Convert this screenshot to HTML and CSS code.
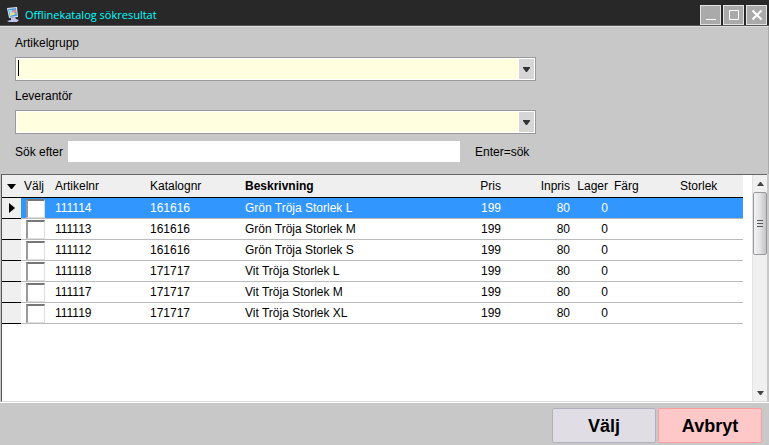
FILE: index.html
```
<!DOCTYPE html>
<html lang="sv">
<head>
  <meta charset="UTF-8" />
  <meta name="viewport" content="width=device-width, initial-scale=1.0"/>
  <title>Offlinekatalog sökresultat</title>
  <link rel="stylesheet" href="styles.css">
</head>
<body>
  <header class="titlebar">
    <svg class="app-icon" width="14" height="16" viewBox="0 0 14 16" aria-hidden="true">
      <path d="M1 1l10-1 1 10-9 1z" fill="#dfe6f5"/>
      <path d="M2 2l8-1 1 8-7 1z" fill="#4b9be0"/>
      <path d="M3 3h3v4H4z" fill="#9be3f0"/>
      <path d="M6 4l3-2 1 3-3 2z" fill="#e98a96"/>
      <path d="M4 7l3-2 3 2-6 2z" fill="#e5e38a"/>
      <path d="M5 11l4-1 1 2 3 1-2 2H3l-2-1 4-1z" fill="#c3c4ea"/>
    </svg>
    <h1>Offlinekatalog sökresultat</h1>
    <div class="window-buttons">
      <button type="button" aria-label="Minimera">
        <svg width="18" height="18" viewBox="0 0 18 18"><path d="M4 13.5h10"/></svg>
      </button>
      <button type="button" aria-label="Maximera">
        <svg width="18" height="18" viewBox="0 0 18 18"><path d="M4.5 4.5h9v9h-9z"/></svg>
      </button>
      <button type="button" aria-label="Stäng">
        <svg width="18" height="18" viewBox="0 0 18 18"><path class="thick" d="M4.5 4.5l9 9m0-9l-9 9"/></svg>
      </button>
    </div>
  </header>

  <form class="search">
    <label for="group">Artikelgrupp</label>
    <div class="combo">
      <select id="group"><option value=""></option></select>
      <span class="caret"></span>
      <span class="arrow"><svg width="7" height="5" viewBox="0 0 7 5"><path d="M0 0h7v1L4 5H3L0 1z"/></svg></span>
    </div>
    <label for="supplier">Leverantör</label>
    <div class="combo">
      <select id="supplier"><option value=""></option></select>
      <span class="arrow"><svg width="7" height="5" viewBox="0 0 7 5"><path d="M0 0h7v1L4 5H3L0 1z"/></svg></span>
    </div>
    <div class="search-row">
      <label for="query">Sök efter</label>
      <input type="text" id="query" />
      <span class="hint">Enter=sök</span>
    </div>
  </form>

  <main class="grid">
    <div class="table-area">
      <table>
        <colgroup>
          <col class="c-mark"><col class="c-pick"><col class="c-nr"><col class="c-nr"><col>
          <col class="c-price"><col class="c-inprice"><col class="c-stock"><col class="c-prop"><col class="c-prop">
        </colgroup>
        <thead>
          <tr>
            <th class="mark"><svg width="9" height="5" viewBox="0 0 9 5"><path d="M0 0h9L5 5H4z"/></svg></th>
            <th>Välj</th>
            <th>Artikelnr</th>
            <th>Katalognr</th>
            <th class="sorted">Beskrivning</th>
            <th class="num">Pris</th>
            <th class="num">Inpris</th>
            <th class="num">Lager</th>
            <th>Färg</th>
            <th>Storlek</th>
          </tr>
        </thead>
        <tbody>
          <tr class="selected">
            <td class="mark"><svg width="6" height="10" viewBox="0 0 6 10"><path d="M0 0l6 5-6 5z"/></svg></td>
            <td class="pick"><input type="checkbox" aria-label="Välj 111114" /></td>
            <td>111114</td><td>161616</td><td>Grön Tröja Storlek L</td>
            <td class="num">199</td><td class="num">80</td><td class="num">0</td><td></td><td></td>
          </tr>
          <tr>
            <td class="mark"></td>
            <td class="pick"><input type="checkbox" aria-label="Välj 111113" /></td>
            <td>111113</td><td>161616</td><td>Grön Tröja Storlek M</td>
            <td class="num">199</td><td class="num">80</td><td class="num">0</td><td></td><td></td>
          </tr>
          <tr>
            <td class="mark"></td>
            <td class="pick"><input type="checkbox" aria-label="Välj 111112" /></td>
            <td>111112</td><td>161616</td><td>Grön Tröja Storlek S</td>
            <td class="num">199</td><td class="num">80</td><td class="num">0</td><td></td><td></td>
          </tr>
          <tr>
            <td class="mark"></td>
            <td class="pick"><input type="checkbox" aria-label="Välj 111118" /></td>
            <td>111118</td><td>171717</td><td>Vit Tröja Storlek L</td>
            <td class="num">199</td><td class="num">80</td><td class="num">0</td><td></td><td></td>
          </tr>
          <tr>
            <td class="mark"></td>
            <td class="pick"><input type="checkbox" aria-label="Välj 111117" /></td>
            <td>111117</td><td>171717</td><td>Vit Tröja Storlek M</td>
            <td class="num">199</td><td class="num">80</td><td class="num">0</td><td></td><td></td>
          </tr>
          <tr>
            <td class="mark"></td>
            <td class="pick"><input type="checkbox" aria-label="Välj 111119" /></td>
            <td>111119</td><td>171717</td><td>Vit Tröja Storlek XL</td>
            <td class="num">199</td><td class="num">80</td><td class="num">0</td><td></td><td></td>
          </tr>
        </tbody>
      </table>
    </div>
    <div class="scrollbar" aria-hidden="true">
      <span class="step"><svg width="7" height="4" viewBox="0 0 7 4"><path d="M0 4l3-4h1l3 4z"/></svg></span>
      <span class="thumb"><i></i><i></i><i></i></span>
      <span class="step last"><svg width="7" height="4" viewBox="0 0 7 4"><path d="M0 0h7L4 4H3z"/></svg></span>
    </div>
  </main>

  <footer>
    <button type="button" class="button">Välj</button>
    <button type="button" class="button cancel">Avbryt</button>
  </footer>
</body>
</html>
```

FILE: styles.css
```
* {
  box-sizing: border-box;
}
body {
  font-family: "Liberation Sans", Arial, sans-serif;
  font-size: 12px;
  line-height: 16px;
  background: #c8c8c8;
  color: #000;
  margin: 0;
  min-height: 100vh;
  display: flex;
  flex-direction: column;
}
svg {
  display: block;
}
.titlebar {
  display: flex;
  align-items: center;
  height: 26px;
  padding: 5px 2px 0 6px;
  background: #282828;
  border-bottom: 1px solid #555;
}
.titlebar h1 {
  flex: 1;
  margin: 0 0 0 5px;
  font-family: "Open Sans", "Segoe UI", sans-serif;
  font-size: 11px;
  font-weight: 400;
  color: #00ffff;
}
.window-buttons {
  display: flex;
  gap: 2px;
}
.window-buttons button {
  width: 21px;
  height: 20px;
  padding: 0 1px;
  background: #aaa;
  border: 1px solid #e4e4e4;
}
.window-buttons path {
  fill: none;
  stroke: #fff;
}
.window-buttons .thick {
  stroke-width: 2;
}
.search {
  padding: 6px 15px 12px;
  border-top: 1px solid #ddd;
  border-right: 1px solid #aaa;
}
.search > label {
  display: block;
  line-height: 20px;
}
.combo {
  position: relative;
  max-width: 521px;
  margin: 4px 0 5px;
}
.combo select {
  display: block;
  width: 100%;
  height: 24px;
  appearance: none;
  background: #ffffdf;
  border: 1px solid #999;
  border-radius: 0;
  box-shadow: inset 0 0 0 1px #fff;
  font: inherit;
  outline: none;
}
.caret {
  position: absolute;
  left: 3px;
  top: 3px;
  width: 1px;
  height: 16px;
  background: #000;
}
.arrow {
  position: absolute;
  top: 2px;
  right: 2px;
  bottom: 2px;
  width: 15px;
  display: flex;
  align-items: center;
  justify-content: center;
  background: #d6d6d6;
  box-shadow: -1px 0 #fff;
  pointer-events: none;
}
.arrow path {
  fill: #333;
}
.search-row {
  display: flex;
  align-items: center;
  margin-top: 7px;
}
.search-row label {
  width: 53px;
  white-space: nowrap;
}
.search-row input {
  width: 392px;
  height: 21px;
  padding: 0 3px;
  border: 0;
  background: #fff;
  font: inherit;
  outline: none;
}
.hint {
  margin-left: 15px;
}

/* result list */
.grid {
  flex: 1;
  display: flex;
  margin: 0 2px 0 1px;
  background: #fff;
  border-top: 1px solid #666;
  border-left: 1px solid #555;
  border-bottom: 1px solid #ddd;
}
.table-area {
  flex: 1;
  margin-right: 9px;
}
table {
  width: 100%;
  table-layout: fixed;
  border-collapse: separate;
  border-spacing: 0;
}
.c-mark { width: 19px; }
.c-pick { width: 31px; }
.c-nr { width: 95px; }
.c-price { width: 60px; }
.c-inprice { width: 69px; }
.c-stock { width: 38px; }
.c-prop { width: 66px; }
th, td {
  padding: 0 3px;
  text-align: left;
  font-weight: 400;
  white-space: nowrap;
}
th {
  height: 23px;
  background: #efefef;
  border-bottom: 1px solid #000;
}
td {
  height: 21px;
  border-bottom: 1px solid #bbb;
}
.sorted {
  font-weight: 700;
}
.num {
  text-align: right;
}
.mark {
  padding: 0 5px;
}
td.mark {
  padding: 0 7px;
  background: #efefef;
  border-bottom-color: #000;
}
.selected td:not(.mark) {
  background: #3296ff;
  color: #fff;
}
.pick {
  padding: 0 0 0 5px;
}
.pick input {
  display: block;
  appearance: none;
  width: 19px;
  height: 19px;
  margin: 0;
  background: #fff;
  border: 1px solid #ddd;
  border-top: 2px solid #777;
  border-left: 2px solid #999;
}
.scrollbar {
  width: 15px;
  display: flex;
  flex-direction: column;
  background: #f0f0f0;
  border-left: 1px solid #e2e2e2;
}
.step {
  height: 17px;
  display: flex;
  align-items: center;
  justify-content: center;
}
.step path {
  fill: #444;
}
.last {
  margin-top: auto;
}
.thumb {
  height: 63px;
  display: flex;
  flex-direction: column;
  align-items: center;
  justify-content: center;
  gap: 2px;
  background: linear-gradient(to right, #f4f4f4, #e2e2e4 50%, #c4c4c8);
  border: 1px solid #999;
  border-radius: 2px;
}
.thumb i {
  width: 6px;
  height: 1px;
  background: #555;
}
footer {
  display: flex;
  justify-content: flex-end;
  gap: 2px;
  padding: 5px 7px 2px;
  border-top: 1px solid #fff;
}
.button {
  width: 104px;
  height: 35px;
  padding: 0;
  background: #e0dee4;
  border: 1px solid #b0b0c0;
  border-radius: 2px;
  color: #000;
  font: bold 18px/24px "Liberation Sans", Arial, sans-serif;
}
.cancel {
  background: #ffc8c8;
  border-color: #ff9c9c;
}
```
